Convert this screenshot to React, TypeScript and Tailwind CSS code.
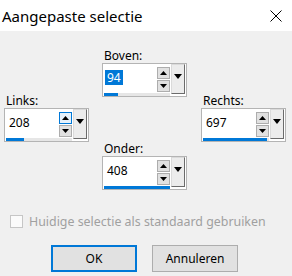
import React from "react";

const FONT = "font-['Noto_Sans','Open_Sans',sans-serif]";

interface SpinProps {
  label: string;
  value: string;
  bar: number;
  selected?: boolean;
  hot?: boolean;
}

function UpArrow() {
  return (
    <svg width="7" height="4" viewBox="0 0 7 4" className="block">
      <path d="M0 4 L3.5 0 L7 4 Z" fill="#000" />
    </svg>
  );
}

function DownArrow({ w = 7, h = 4 }: { w?: number; h?: number }) {
  return (
    <svg width={w} height={h} viewBox={`0 0 ${w} ${h}`} className="block">
      <path d={`M0 0 L${w} 0 L${w / 2} ${h} Z`} fill="#000" />
    </svg>
  );
}

function SpinField({ label, value, bar, selected, hot }: SpinProps) {
  return (
    <div className="flex flex-col">
      <div className="h-[15px] pl-[2px] text-[12px] leading-[15px] text-black">{label}</div>
      <div className="flex h-[34px] w-[85px] border border-[#b4b4b4] bg-white">
        <div className="flex w-[67px] flex-col">
          <div className="flex flex-1">
            <div className="flex flex-1 items-center pl-[2px] pb-[2px]">
              <span
                className={`px-[2px] text-[12px] leading-[15px] ${
                  selected ? "bg-[#0078d7] text-white" : "text-black"
                }`}
              >
                {value}
              </span>
            </div>
            <div className="flex flex-col gap-[1px] pt-[3px]">
              <div
                className={`flex h-[12px] w-[13px] items-center justify-center border ${
                  hot ? "border-[#0078d7] bg-[#e5f1fb]" : "border-[#adadad] bg-[#e1e1e1]"
                }`}
              >
                <UpArrow />
              </div>
              <div className="flex h-[12px] w-[13px] items-center justify-center border border-[#adadad] bg-[#e1e1e1]">
                <DownArrow />
              </div>
            </div>
          </div>
          <div className="ml-[1px] h-[3px] bg-[#e6e6e6]">
            <div className="h-full bg-[#0078d7]" style={{ width: bar }} />
          </div>
        </div>
        <div className="ml-[1px] mb-[2px] flex w-[14px] justify-center border border-[#dadada] border-r-[#6b6b6b] border-b-[#6b6b6b] bg-[#ececec] pt-[9px]">
          <DownArrow w={8} h={5} />
        </div>
      </div>
    </div>
  );
}

export default function App() {
  return (
    <div className={`h-[276px] w-[292px] overflow-hidden bg-[#f0f0f0] ${FONT}`}>
      {/* Title bar */}
      <div className="flex h-[31px] items-center justify-between bg-white pl-[2px] pr-[10px]">
        <span className="text-[15px] leading-[20px] text-black">Aangepaste selectie</span>
        <svg width="12" height="12" viewBox="0 0 12 12">
          <path d="M0.5 0.5 L11.5 11.5 M11.5 0.5 L0.5 11.5" stroke="#000" strokeWidth="1" />
        </svg>
      </div>

      <div className="pt-[17px]">
        <div className="flex pl-[102px]">
          <SpinField label="Boven:" value="94" bar={14} selected />
        </div>
        <div className="-mt-[4px] flex gap-[112px] pl-[4px]">
          <SpinField label="Links:" value="208" bar={18} hot />
          <SpinField label="Rechts:" value="697" bar={64} />
        </div>
        <div className="-mt-[1px] flex pl-[102px]">
          <SpinField label="Onder:" value="408" bar={66} />
        </div>

        <div className="mt-[25px] flex items-center gap-[6px] pl-[10px]">
          <div className="h-[13px] w-[13px] border border-[#c6c6c6] bg-[#fbfbfb]" />
          <span className="text-[12.4px] leading-[13px] text-[#a0a0a0]">
            Huidige selectie als standaard gebruiken
          </span>
        </div>

        <div className="mt-[17px] flex gap-[15px] pl-[51px]">
          <button className="h-[27px] w-[86px] border-2 border-[#0078d7] bg-[#e1e1e1] text-[12px] text-black">
            OK
          </button>
          <button className="h-[27px] w-[86px] border border-[#adadad] bg-[#e1e1e1] text-[12px] text-black">
            Annuleren
          </button>
        </div>
      </div>
    </div>
  );
}
